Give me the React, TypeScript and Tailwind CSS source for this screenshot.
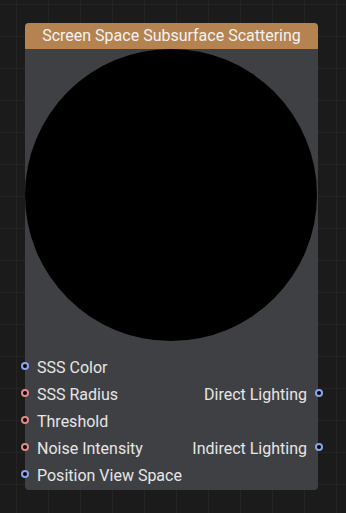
import React from 'react';

type Port = { label: string; color: 'blue' | 'red' };

const inputs: Port[] = [
    { label: 'SSS Color', color: 'blue' },
    { label: 'SSS Radius', color: 'red' },
    { label: 'Threshold', color: 'red' },
    { label: 'Noise Intensity', color: 'red' },
    { label: 'Position View Space', color: 'blue' },
];

const outputs: (string | null)[] = [null, 'Direct Lighting', null, 'Indirect Lighting', null];

const Dot: React.FC<{ color: 'blue' | 'red'; side: 'left' | 'right' }> = ({ color, side }) => (
    <span
        className={
            'w-[8px] h-[8px] rounded-full border-2 bg-black shrink-0 mt-[-4px] ' +
            (color === 'blue' ? 'border-[#8aa3ec] ' : 'border-[#e58a8a] ') +
            (side === 'left' ? 'ml-[-4px]' : 'mr-[-5px]')
        }
    />
);

const App: React.FC = () => {
    return (
        <div
            className="w-[346px] h-[513px] overflow-hidden bg-[#1b1b1b] bg-[linear-gradient(to_right,#242424_1px,transparent_1px),linear-gradient(to_bottom,#242424_1px,transparent_1px)] bg-[size:32px_32px] bg-[position:16px_4px] pt-[23px] pl-[25px]"
            style={{ fontFamily: 'Roboto, "Open Sans", sans-serif' }}
        >
            <div className="w-[293px] h-[467px] rounded-[4px] bg-[#3f4044] flex flex-col">
                <div className="h-[26px] rounded-t-[4px] bg-[#b5834f] flex items-center justify-center text-[16px] text-[#f2f2f2]">
                    Screen Space Subsurface Scattering
                </div>
                <div className="w-[292px] h-[292px] rounded-full bg-black" />
                <div className="mt-[13px] grid grid-cols-[1fr_auto]">
                    {inputs.map((p, i) => (
                        <React.Fragment key={p.label}>
                            <div className="h-[27px] flex items-center gap-[8px] text-[16px] text-[#e6e6e6]">
                                <Dot color={p.color} side="left" />
                                <span className="mt-[1px]">{p.label}</span>
                            </div>
                            <div className="h-[27px] flex items-center justify-end gap-[8px] text-[16px] text-[#e6e6e6]">
                                {outputs[i] && (
                                    <>
                                        <span className="mt-[1px]">{outputs[i]}</span>
                                        <Dot color="blue" side="right" />
                                    </>
                                )}
                            </div>
                        </React.Fragment>
                    ))}
                </div>
            </div>
        </div>
    );
};

export default App;
